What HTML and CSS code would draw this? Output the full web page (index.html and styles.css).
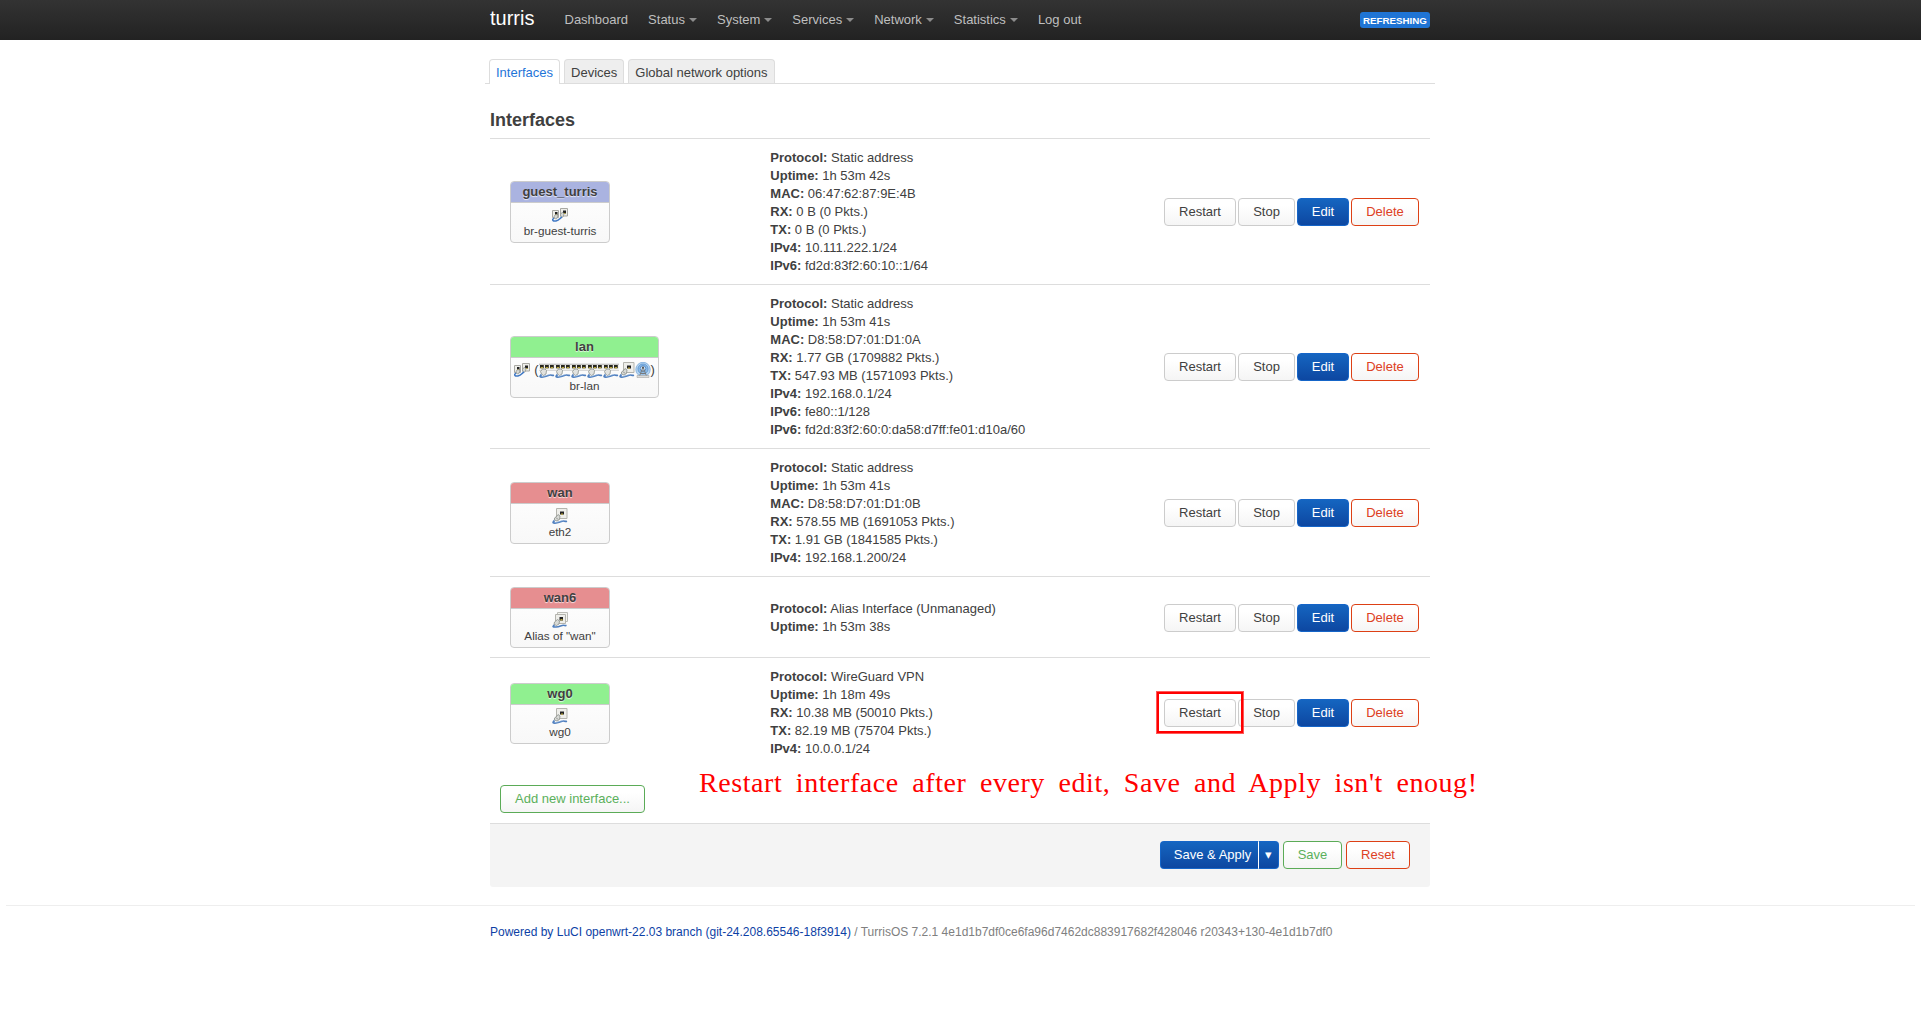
FILE: index.html
```html
<!DOCTYPE html>
<html lang="en">
<head>
<meta charset="utf-8">
<title>turris - Interfaces - LuCI</title>
<link rel="stylesheet" href="styles.css">
</head>
<body>
<svg class="symbols" aria-hidden="true">
  <symbol id="ethernet" viewBox="0 0 16 16">
    <path d="M4.500.5h10.500v10h-10.500z" fill="#eeeeea" stroke="#b4b4ae"/>
    <path d="M8 3.500h4v3H8z" fill="#222"/><path d="M9 5.500h2v1.200H9z" fill="#b9a53a"/>
    <path d="M2.500 10l2.500-2 1-1.500 2 1.500-.5 3.500-2.500 1.500-2.500-1z" fill="#d8dad6" stroke="#8c908c" stroke-width=".8"/>
    <path d="M4 9.500l2 2" stroke="#777" stroke-width=".8"/>
    <path d="M2.500 12.500C0 14.800 1 15.300 4 15c4-.3 5-2 7.500-2 1.500 0 1.500 1 3.500.2" fill="none" stroke="#4f7fbf" stroke-width="1.700"/>
    <path d="M3 14.500c3 0 5-1.800 8-1.900" fill="none" stroke="#a9c6ea" stroke-width=".5"/>
  </symbol>
  <symbol id="alias" viewBox="0 0 16 16">
    <path d="M5.500.5h10v9h-10z" fill="#f4f4f0" stroke="#bcbcb6"/>
    <path d="M3.500 2.500h10v9h-10z" fill="#eeeeea" stroke="#b4b4ae"/>
    <path d="M7.500 5h3.500v3.500H7.500z" fill="#222"/><path d="M8.500 7h2v1.500h-2z" fill="#b9a53a"/>
    <path d="M2.500 10l3-2.500 2 1.500-.5 3-2.500 1.500-2.500-1z" fill="#d8dad6" stroke="#8c908c" stroke-width=".8"/>
    <path d="M2.500 13C0 14.800 1 15.300 4 15c4-.3 5-1.700 7.500-1.700 1.500 0 1.500.7 3 0" fill="none" stroke="#4f7fbf" stroke-width="1.600"/>
  </symbol>
  <symbol id="switch" viewBox="0 0 16 16">
    <path d="M0 2h16v6.500H0z" fill="#f0f0ed"/>
    <path d="M0 2.200h16" stroke="#999" stroke-width=".7"/>
    <path d="M0 8.500h16" stroke="#ccc" stroke-width=".7"/>
    <path d="M1 3h3.800v3.200H1zM6 3h3.800v3.200H6zM11 3h3.800v3.200H11z" fill="#29281f"/>
    <path d="M1.700 5h2.400v1.200H1.700zM6.700 5h2.400v1.200H6.700zM11.700 5h2.400v1.200h-2.400z" fill="#b9a53a"/>
    <path d="M1.500 9.500l2-2.500 2.500 0 1.500 1.500-.5 3.500-2.500 1.500-2-1.500z" fill="#e1e2df" stroke="#8c908c" stroke-width=".8"/>
    <path d="M2.500 12.500C0 14.800 1 15.300 4 15c4-.3 5-2 7.500-2 1.500 0 1.500 1 3.500.2" fill="none" stroke="#4f7fbf" stroke-width="1.700"/>
    <path d="M3 14.500c3 0 5-1.800 8-1.900" fill="none" stroke="#a9c6ea" stroke-width=".5"/>
  </symbol>
  <symbol id="bridge" viewBox="0 0 16 16">
    <path d="M.5 3.500h6v7h-6zM8.500 1.500h7v7.500h-7z" fill="#eeeeea" stroke="#a8a8a3"/>
    <path d="M3 5h2.500v3H3zM11 3.500h3v3h-3z" fill="#222"/>
    <path d="M3.500 7h1.500v1.500H3.500zM11.500 6h2v1h-2z" fill="#b9a53a"/>
    <path d="M2 9l2-1.500 2 1-1.500 3.500-2-.5zM8.500 7.500l2-2.500 1.500 2-1 3-2 .5z" fill="#d8dad6" stroke="#8c908c" stroke-width=".7"/>
    <path d="M2 11c-2.500 2-1 3.500 2 3 3.500-.5 4-3 6-4" fill="none" stroke="#3f78c4" stroke-width="1.500"/>
  </symbol>
  <symbol id="wifi" viewBox="0 0 16 16">
    <circle cx="8" cy="7.500" r="7.200" fill="#b4d3f0" stroke="#78a9da" stroke-width=".8"/>
    <circle cx="8" cy="7" r="5" fill="#8fbbe6" stroke="#5b94cf" stroke-width=".8"/>
    <circle cx="8" cy="6.500" r="2.800" fill="#cfe3f6" stroke="#3f7fc2" stroke-width=".8"/>
    <path d="M8 5L4.500 14M8 5l3.500 9M5.500 11.500h5M6.500 9h3" fill="none" stroke="#777b7d"/>
    <path d="M2 13.500h12v2H2z" fill="#dcdcda" stroke="#999" stroke-width=".5"/>
    <circle cx="8" cy="5.500" r="1" fill="#555"/>
  </symbol>
</svg>

<header class="navbar">
  <div class="container navbar-inner">
    <a class="brand">turris</a>
    <nav class="menu">
      <a>Dashboard</a>
      <a class="dropdown">Status</a>
      <a class="dropdown">System</a>
      <a class="dropdown">Services</a>
      <a class="dropdown">Network</a>
      <a class="dropdown">Statistics</a>
      <a>Log out</a>
    </nav>
    <span class="indicator">REFRESHING</span>
  </div>
</header>

<main class="container">
  <div class="tabs">
    <a class="tab tab-active">Interfaces</a>
    <a class="tab">Devices</a>
    <a class="tab">Global network options</a>
  </div>
  <h3>Interfaces</h3>

  <section class="row">
    <div class="cell-box"><div class="ifacebox tall">
      <div class="head guest">guest_turris</div>
      <div class="body"><div class="icons"><svg><use href="#bridge"/></svg></div><small>br-guest-turris</small></div>
    </div></div>
    <div class="info">
      <div><b>Protocol:</b> Static address</div>
      <div><b>Uptime:</b> 1h 53m 42s</div>
      <div><b>MAC:</b> 06:47:62:87:9E:4B</div>
      <div><b>RX:</b> 0 B (0 Pkts.)</div>
      <div><b>TX:</b> 0 B (0 Pkts.)</div>
      <div><b>IPv4:</b> 10.111.222.1/24</div>
      <div><b>IPv6:</b> fd2d:83f2:60:10::1/64</div>
    </div>
    <div class="actions"><button class="btn restart">Restart</button><button class="btn stop">Stop</button><button class="btn edit primary">Edit</button><button class="btn delete negative">Delete</button></div>
  </section>

  <section class="row">
    <div class="cell-box"><div class="ifacebox tall wide">
      <div class="head lan">lan</div>
      <div class="body"><div class="icons"><svg><use href="#bridge"/></svg><span class="open">(</span><svg><use href="#switch"/></svg><svg><use href="#switch"/></svg><svg><use href="#switch"/></svg><svg><use href="#switch"/></svg><svg><use href="#switch"/></svg><svg><use href="#ethernet"/></svg><svg><use href="#wifi"/></svg><span>)</span></div><small>br-lan</small></div>
    </div></div>
    <div class="info">
      <div><b>Protocol:</b> Static address</div>
      <div><b>Uptime:</b> 1h 53m 41s</div>
      <div><b>MAC:</b> D8:58:D7:01:D1:0A</div>
      <div><b>RX:</b> 1.77 GB (1709882 Pkts.)</div>
      <div><b>TX:</b> 547.93 MB (1571093 Pkts.)</div>
      <div><b>IPv4:</b> 192.168.0.1/24</div>
      <div><b>IPv6:</b> fe80::1/128</div>
      <div><b>IPv6:</b> fd2d:83f2:60:0:da58:d7ff:fe01:d10a/60</div>
    </div>
    <div class="actions"><button class="btn restart">Restart</button><button class="btn stop">Stop</button><button class="btn edit primary">Edit</button><button class="btn delete negative">Delete</button></div>
  </section>

  <section class="row">
    <div class="cell-box"><div class="ifacebox tall">
      <div class="head wan">wan</div>
      <div class="body"><div class="icons"><svg><use href="#ethernet"/></svg></div><small>eth2</small></div>
    </div></div>
    <div class="info">
      <div><b>Protocol:</b> Static address</div>
      <div><b>Uptime:</b> 1h 53m 41s</div>
      <div><b>MAC:</b> D8:58:D7:01:D1:0B</div>
      <div><b>RX:</b> 578.55 MB (1691053 Pkts.)</div>
      <div><b>TX:</b> 1.91 GB (1841585 Pkts.)</div>
      <div><b>IPv4:</b> 192.168.1.200/24</div>
    </div>
    <div class="actions"><button class="btn restart">Restart</button><button class="btn stop">Stop</button><button class="btn edit primary">Edit</button><button class="btn delete negative">Delete</button></div>
  </section>

  <section class="row">
    <div class="cell-box"><div class="ifacebox">
      <div class="head wan">wan6</div>
      <div class="body"><div class="icons"><svg><use href="#alias"/></svg></div><small>Alias of "wan"</small></div>
    </div></div>
    <div class="info">
      <div><b>Protocol:</b> Alias Interface (Unmanaged)</div>
      <div><b>Uptime:</b> 1h 53m 38s</div>
    </div>
    <div class="actions"><button class="btn restart">Restart</button><button class="btn stop">Stop</button><button class="btn edit primary">Edit</button><button class="btn delete negative">Delete</button></div>
  </section>

  <section class="row row-last">
    <div class="cell-box"><div class="ifacebox">
      <div class="head lan">wg0</div>
      <div class="body"><div class="icons"><svg><use href="#ethernet"/></svg></div><small>wg0</small></div>
    </div></div>
    <div class="info">
      <div><b>Protocol:</b> WireGuard VPN</div>
      <div><b>Uptime:</b> 1h 18m 49s</div>
      <div><b>RX:</b> 10.38 MB (50010 Pkts.)</div>
      <div><b>TX:</b> 82.19 MB (75704 Pkts.)</div>
      <div><b>IPv4:</b> 10.0.0.1/24</div>
    </div>
    <div class="actions"><button class="btn restart">Restart</button><button class="btn stop">Stop</button><button class="btn edit primary">Edit</button><button class="btn delete negative">Delete</button></div>
    <div class="highlight"></div>
    <div class="note">Restart interface after every edit, Save and Apply isn't enoug!</div>
  </section>

  <div class="create"><button class="btn add positive">Add new interface...</button></div>

  <div class="page-actions">
    <div class="split"><button class="btn primary apply">Save &amp; Apply</button><button class="btn primary arrow">▾</button></div>
    <button class="btn positive save">Save</button>
    <button class="btn negative reset">Reset</button>
  </div>
</main>

<footer>
  <div class="container"><a>Powered by LuCI openwrt-22.03 branch (git-24.208.65546-18f3914)</a> / TurrisOS 7.2.1 4e1d1b7df0ce6fa96d7462dc883917682f428046 r20343+130-4e1d1b7df0</div>
</footer>
</body>
</html>
```

FILE: styles.css
```css
* { box-sizing: border-box; }
body {
  margin: 0;
  background: #fff;
  color: #404040;
  font: 13px/18px "Liberation Sans", Arial, sans-serif;
}
.symbols { display: none; }
.container { width: 940px; margin: 0 auto 0 490px; }

.navbar {
  height: 40px;
  background: linear-gradient(#333, #222);
}
.navbar-inner { display: flex; height: 40px; align-items: flex-start; }
.brand {
  width: 64.500px;
  padding-top: 8px;
  color: #fff;
  font-size: 20px;
  line-height: 20px;
}
.menu { display: flex; gap: 20px; padding: 10px 0 0 10px; color: #bfbfbf; line-height: 19px; }
.dropdown { display: flex; }
.dropdown::after {
  content: "";
  margin: 8px 0 0 4px;
  width: 0;
  height: 0;
  border: 4px solid transparent;
  border-top-color: #8c8c8c;
  border-bottom: 0;
}
.indicator {
  width: 70px;
  height: 16px;
  margin: 12px 0 0 auto;
  border-radius: 3px;
  background: #1f74d4;
  color: #fff;
  font-size: 9.750px;
  font-weight: bold;
  line-height: 17px;
  text-align: center;
}

.tabs {
  display: flex;
  gap: 4px;
  height: 25px;
  margin: 19px -5px 0;
  padding-left: 4px;
  border-bottom: 1px solid #ddd;
}
.tab {
  height: 24px;
  padding: 4px 6px 0;
  border: 1px solid #ddd;
  border-bottom: 0;
  border-radius: 4px 4px 0 0;
  background: #eee;
}
.tab-active { height: 25px; background: #fff; color: #1f75d8; }
h3 {
  height: 55px;
  margin: 0;
  padding-top: 18px;
  border-bottom: 1px solid #ddd;
  font-size: 18px;
  line-height: 36px;
}

.row {
  position: relative;
  display: grid;
  grid-template-columns: 280px 1fr auto;
  align-items: center;
  padding: 10px 11px 9px 0;
  border-bottom: 1px solid #ddd;
}
.row-last { border-bottom: 0; }
.cell-box { padding-left: 20px; }
.ifacebox {
  width: 100px;
  height: 61px;
  overflow: hidden;
  border: 1px solid #ccc;
  border-radius: 4px;
  background: linear-gradient(#fff, #f8f8f8);
  text-align: center;
}
.tall { height: 62px; }
.wide { width: 149px; }
.head {
  height: 21px;
  border-bottom: 1px solid #ccc;
  font-weight: bold;
  line-height: 20px;
  text-shadow: 0 1px 1px rgba(255, 255, 255, .75);
}
.guest { background: #aab3e0; }
.lan { background: #90f090; }
.wan { background: #e68e90; }
.body { padding-top: 3px; }
.tall .body { padding-top: 4px; }
.icons { display: flex; justify-content: center; height: 16px; line-height: 16px; }
.icons svg { width: 16px; height: 16px; }
.open { padding-left: 4px; }
small { display: block; font-size: 11.700px; line-height: 16px; }
.info { padding-left: .3px; }
.actions { display: flex; gap: 2px; }

.btn {
  height: 28px;
  padding: 0;
  border: 1px solid #ccc;
  border-radius: 4px;
  background: linear-gradient(#fff 25%, #f5f5f5);
  color: #404040;
  font: 13px/18px "Liberation Sans", Arial, sans-serif;
}
.restart { width: 72px; }
.stop { width: 57px; }
.edit { width: 52px; }
.delete { width: 68px; }
.primary { border-color: #1565c8; background: linear-gradient(#1565c0, #0d47a1); color: #fff; }
.negative { border-color: #dd4015; color: #dd4024; }
.positive { border-color: #5bab57; color: #5bb05b; }
.add { width: 145px; }

.highlight {
  position: absolute;
  left: 667px;
  top: 34px;
  width: 86px;
  height: 41px;
  border: 2px solid #f00;
  box-shadow: 0 0 0 1px rgba(255, 0, 0, .65);
}
.note {
  position: absolute;
  left: 209px;
  top: 107px;
  color: #f00;
  font: 28px/36px "Bitstream Charter", Charter, "Liberation Serif", serif;
  letter-spacing: .56px;
  word-spacing: 6px;
  white-space: nowrap;
}
.create { padding: 18px 10px 10px; height: 56px; }
.page-actions {
  display: flex;
  justify-content: flex-end;
  gap: 4px;
  height: 64px;
  padding: 17px 20px 0 0;
  border-top: 1px solid #ddd;
  border-radius: 0 0 3px 3px;
  background: #f4f4f4;
}
.split { display: flex; }
.apply { width: 98px; padding-left: 6px; border-right: 0; border-radius: 4px 0 0 4px; }
.arrow { width: 21px; border-left: 1px solid #fff; border-radius: 0 4px 4px 0; }
.save { width: 59px; }
.reset { width: 64px; }

footer {
  margin: 18px 6px 0;
  padding-top: 17px;
  border-top: 1px solid #eee;
  color: #808080;
  font-size: 12px;
}
footer .container { margin-left: 484px; }
footer a { color: #0d3fa5; }
```
